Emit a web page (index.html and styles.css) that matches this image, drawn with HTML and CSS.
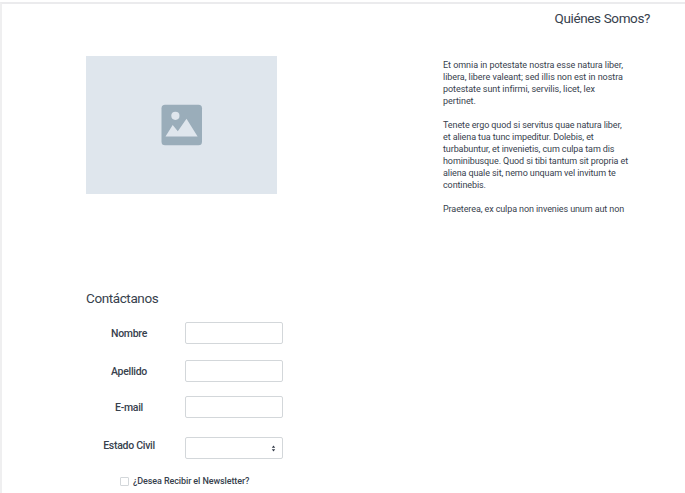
FILE: index.html
```html
<!DOCTYPE html>
<html lang="es">
<head>
<meta charset="utf-8">
<title>Quiénes Somos</title>
<link rel="stylesheet" href="styles.css">
</head>
<body>
<main class="page">
  <h1 class="page-title">Quiénes Somos?</h1>
  <section class="about">
    <div class="picture">
      <svg width="42" height="42" viewBox="0 0 42 42" aria-hidden="true">
        <rect x="0.5" y="0.8" width="40.5" height="40.5" rx="3.5" fill="#9aadba"/>
        <circle cx="14.4" cy="11.8" r="4.1" fill="#dfe6ed"/>
        <path d="M4.5 32.4 L11.7 21 L16.8 27.2 L25.5 14.8 L36.6 32.4 Z" fill="#dfe6ed"/>
      </svg>
    </div>
    <div class="copy">
      <p>Et omnia in potestate nostra esse natura liber,<br>libera, libere valeant; sed illis non est in nostra<br>potestate sunt infirmi, servilis, licet, lex<br>pertinet.</p>
      <p>Tenete ergo quod si servitus quae natura liber,<br>et aliena tua tunc impeditur. Dolebis, et<br>turbabuntur, et invenietis, cum culpa tam dis<br>hominibusque. Quod si tibi tantum sit propria et<br>aliena quale sit, nemo unquam vel invitum te<br>continebis.</p>
      <p>Praeterea, ex culpa non invenies unum aut non</p>
    </div>
  </section>
  <form class="contact">
    <h2>Contáctanos</h2>
    <div class="row"><label for="nombre">Nombre</label><input id="nombre" type="text"></div>
    <div class="row"><label for="apellido">Apellido</label><input id="apellido" type="text"></div>
    <div class="row row-email"><label for="email">E-mail</label><input id="email" type="text"></div>
    <div class="row row-estado"><label for="estado">Estado Civil</label>
      <button id="estado" class="select" type="button">
        <svg width="5" height="7" viewBox="0 0 5 7" aria-hidden="true"><path d="M0.8 2.8 L2.5 0.6 L4.2 2.8Z M0.8 4.2 L2.5 6.4 L4.2 4.2Z" fill="#303846"/></svg>
      </button>
    </div>
    <label class="newsletter"><input type="checkbox"><span>¿Desea Recibir el Newsletter?</span></label>
  </form>
</main>
</body>
</html>
```
FILE: styles.css
```css
* { box-sizing: border-box; }
body { margin: 0; background: #fff; color: #37414d; font-family: Roboto, "Liberation Sans", sans-serif; overflow: hidden; }
.page { height: 491px; margin-top: 2px; border-top: 2px solid #ebebed; border-left: 2px solid #efeff0; padding-left: 84px; }
h1, h2, p { margin: 0; font-weight: 400; }
.page-title { padding: 4px 35px 0 0; text-align: right; font-size: 13.5px; letter-spacing: -0.38px; line-height: 20px; height: 52px; }
.about { display: flex; justify-content: space-between; height: 234px; padding-right: 42px; }
.picture { width: 191px; height: 138px; display: flex; align-items: center; justify-content: center; background: #dfe6ed; }
.copy { width: 200px; padding-top: 3px; font-size: 9px; line-height: 12px; font-weight: 500; white-space: nowrap; letter-spacing: -0.1px; }
.copy p:first-child { letter-spacing: -0.05px; }
.copy p + p { margin-top: 12px; }
h2 { font-size: 13.5px; letter-spacing: -0.4px; line-height: 17px; height: 32px; }
.row { display: flex; gap: 13px; height: 38px; }
.row label { width: 86px; text-align: center; font-size: 10.5px; font-weight: 500; letter-spacing: -0.28px; line-height: 24px; }
.row-email { height: 41px; margin-top: -2px; }
.row-estado label { line-height: 18px; }
.row input, .select { width: 98px; height: 22px; border: 1px solid #d3d7da; border-radius: 2px; background: #fff; padding: 0; }
.select { display: flex; align-items: center; justify-content: flex-end; padding-right: 6px; }
.newsletter { display: flex; align-items: center; gap: 4px; padding-left: 34px; font-size: 9px; line-height: 12px; font-weight: 500; letter-spacing: -0.1px; }
.newsletter input { appearance: none; width: 9px; height: 9px; margin: 0; border: 1px solid #d3d7da; border-radius: 1px; }
```
